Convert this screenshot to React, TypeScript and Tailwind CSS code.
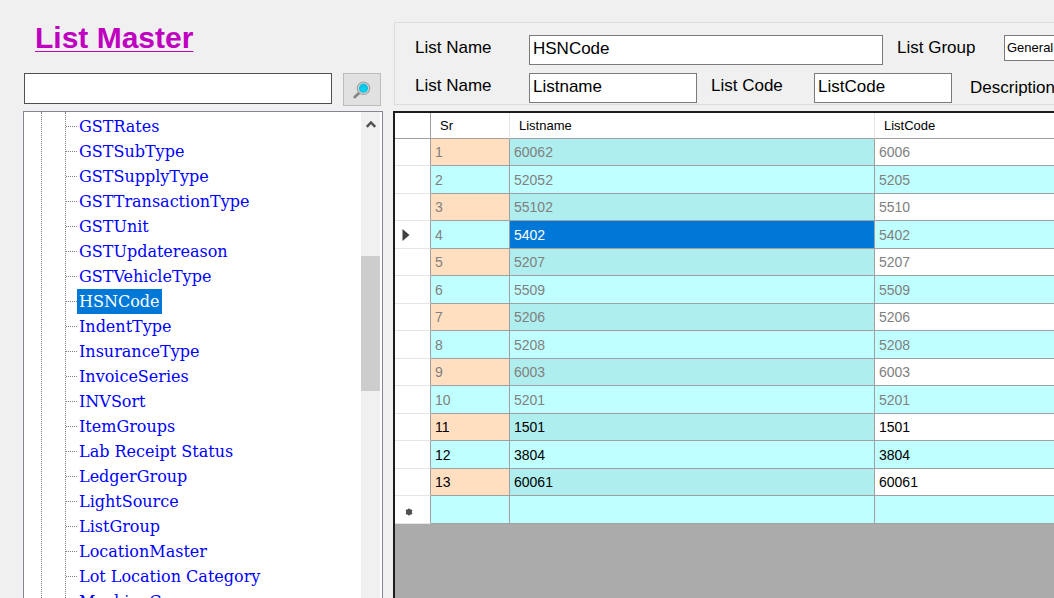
import React from "react";

type Row = { sr: string; name: string; code: string; locked: boolean };

const make = (sr: number, name: string, code: string, locked = true): Row => ({
  sr: String(sr),
  name,
  code,
  locked,
});

const rows: Row[] = [
  make(1, "60062", "6006"),
  make(2, "52052", "5205"),
  make(3, "55102", "5510"),
  make(4, "5402", "5402"),
  make(5, "5207", "5207"),
  make(6, "5509", "5509"),
  make(7, "5206", "5206"),
  make(8, "5208", "5208"),
  make(9, "6003", "6003"),
  make(10, "5201", "5201"),
  make(11, "1501", "1501", false),
  make(12, "3804", "3804", false),
  make(13, "60061", "60061", false),
  { sr: "", name: "", code: "", locked: false },
];

const treeItems = [
  "GSTRates",
  "GSTSubType",
  "GSTSupplyType",
  "GSTTransactionType",
  "GSTUnit",
  "GSTUpdatereason",
  "GSTVehicleType",
  "HSNCode",
  "IndentType",
  "InsuranceType",
  "InvoiceSeries",
  "INVSort",
  "ItemGroups",
  "Lab Receipt Status",
  "LedgerGroup",
  "LightSource",
  "ListGroup",
  "LocationMaster",
  "Lot Location Category",
  "MachineGroup",
];

function SearchIcon() {
  return (
    <svg width="18" height="18" viewBox="0 0 18 18" aria-hidden="true">
      <path d="M1.8 16 L5.8 12.2" stroke="#858585" strokeWidth="2.8" strokeLinecap="round" />
      <circle cx="10.5" cy="7.2" r="6.2" fill="#d8d8d8" stroke="#a2a2a2" strokeWidth="1.2" />
      <circle cx="10.5" cy="7.2" r="4.6" fill="#12bfe0" />
      <circle cx="10.5" cy="8" r="2.6" fill="#08d3ef" />
    </svg>
  );
}

function TreePanel() {
  return (
    <div className="flex min-h-0 flex-1 overflow-hidden border border-b-0 border-[#828790] bg-white">
      <nav aria-label="Lists" className="flex min-w-0 flex-1 overflow-hidden pl-[17px]">
        <div className="w-6 shrink-0 border-l border-dotted border-[#808080]" />
        <ul className="border-l border-dotted border-[#808080] pt-0.5">
          {treeItems.map((item) => (
            <li key={item} className="flex h-[25px] items-center">
              <span className="w-[11px] border-t border-dotted border-[#808080]" />
              <a
                href="#"
                className={
                  item === "HSNCode"
                    ? "bg-[#0078d7] px-0.5 text-[16px] leading-[25px] whitespace-nowrap text-white"
                    : "px-0.5 text-[16px] leading-[25px] whitespace-nowrap text-[#0000ff]"
                }
                style={{ fontFamily: '"DejaVu Serif", serif' }}
              >
                {item}
              </a>
            </li>
          ))}
        </ul>
      </nav>
      <div className="mr-0.5 flex w-[19px] shrink-0 flex-col bg-[#f0f0f0]">
        <div className="flex h-6 items-center justify-center">
          <svg width="12" height="8" viewBox="0 0 12 8" aria-hidden="true">
            <path d="M1.8 6.8 L6 2.4 L10.2 6.8" fill="none" stroke="#505050" strokeWidth="2.4" />
          </svg>
        </div>
        <div className="mt-[120px] h-[135px] bg-[#cdcdcd]" />
      </div>
    </div>
  );
}

function Field({ id, label, value, labelClass, inputClass }: {
  id: string;
  label: string;
  value: string;
  labelClass: string;
  inputClass: string;
}) {
  return (
    <>
      <label htmlFor={id} className={`shrink-0 text-[17px] leading-5 whitespace-nowrap ${labelClass}`}>
        {label}
      </label>
      <input
        id={id}
        defaultValue={value}
        className={`h-[30px] shrink-0 border border-[#7a7a7a] bg-white px-[3px] pb-0.5 text-[17px] outline-none ${inputClass}`}
      />
    </>
  );
}

function DetailsGroup() {
  return (
    <section className="mt-[22px] ml-px h-[83px] overflow-hidden border border-r-0 border-[#dcdcdc] pt-3 pl-5">
      <div className="flex h-[30px] items-start">
        <Field id="list-name" label="List Name" value="HSNCode" labelClass="mt-[3px] w-[114px]" inputClass="w-[354px]" />
        <label htmlFor="list-group" className="mt-[3px] ml-3.5 w-[107px] shrink-0 text-[17px] leading-5">
          List Group
        </label>
        <select
          id="list-group"
          className="h-[26px] w-[180px] shrink-0 appearance-none border border-[#7a7a7a] bg-white px-0.5 text-[13px] outline-none"
        >
          <option>General</option>
        </select>
      </div>
      <div className="mt-2 flex h-[30px] items-start">
        <Field id="list-name-2" label="List Name" value="Listname" labelClass="mt-[3px] w-[114px]" inputClass="w-[168px]" />
        <Field id="list-code" label="List Code" value="ListCode" labelClass="mt-[3px] ml-3.5 w-[103px]" inputClass="w-[138px]" />
        <Field id="description" label="Description" value="" labelClass="mt-[5px] ml-[18px] w-[103px]" inputClass="w-[138px]" />
      </div>
    </section>
  );
}

function RowMarker({ index }: { index: number }) {
  if (index === 3) {
    return (
      <svg width="8" height="14" viewBox="0 0 8 14" className="ml-[7px]" role="img" aria-label="Current row">
        <path d="M0.5 1 L7.5 7 L0.5 13 Z" fill="#404040" />
      </svg>
    );
  }
  if (index === rows.length - 1) {
    return (
      <svg width="8" height="8" viewBox="0 0 8 8" className="mt-1 ml-2.5" role="img" aria-label="New row">
        <circle cx="4" cy="4" r="3" fill="#505050" />
        <path d="M4 0.4 V7.6 M0.9 2.2 L7.1 5.8 M0.9 5.8 L7.1 2.2" stroke="#505050" strokeWidth="1.4" />
      </svg>
    );
  }
  return null;
}

function Grid() {
  const head = "border-b border-b-[#a0a0a0] bg-white px-[9px] text-left text-[13px] font-normal";
  const cell = "border-b border-[#a0a0a0] px-1 py-0";
  return (
    <div className="mt-1.5 min-h-0 flex-1 overflow-hidden border-t-2 border-l-2 border-[#1c1c1c] bg-[#ababab]">
      <table className="w-full table-fixed border-separate border-spacing-0 text-[14px] leading-6">
        <colgroup>
          <col className="w-9" />
          <col className="w-[79px]" />
          <col className="w-[365px]" />
          <col />
        </colgroup>
        <thead>
          <tr className="h-[26px]">
            <th className={`${head} border-r border-r-[#a0a0a0]`} aria-label="Row" />
            <th className={`${head} border-r border-r-[#e5e5e5]`}>Sr</th>
            <th className={`${head} border-r border-r-[#e5e5e5]`}>Listname</th>
            <th className={head}>ListCode</th>
          </tr>
        </thead>
        <tbody>
          {rows.map((row, i) => {
            const odd = i % 2 === 0;
            return (
              <tr
                key={i}
                className={`${odd ? "h-[27px]" : "h-7"} ${row.locked ? "text-[#808080]" : "text-black"}`}
              >
                <td className="border-r border-b border-r-[#a0a0a0] border-b-[#e5e5e5] bg-white p-0">
                  <RowMarker index={i} />
                </td>
                <td className={`${cell} border-r ${odd ? "bg-[#ffdfbf]" : "bg-[#c0ffff]"}`}>{row.sr}</td>
                <td
                  className={`${cell} border-r ${
                    i === 3 ? "bg-[#0078d7] text-white" : odd ? "bg-[#afeeee]" : "bg-[#c0ffff]"
                  }`}
                >
                  {row.name}
                </td>
                <td className={`${cell} ${odd ? "bg-white" : "bg-[#c0ffff]"}`}>{row.code}</td>
              </tr>
            );
          })}
        </tbody>
      </table>
    </div>
  );
}

export default function App() {
  return (
    <div
      className="flex h-screen overflow-hidden bg-[#f0f0f0] text-black"
      style={{ fontFamily: '"Liberation Sans", Arial, sans-serif' }}
    >
      <aside className="ml-[23px] flex w-[360px] shrink-0 flex-col">
        <h1 className="mt-5 ml-3 text-[30px] leading-9 font-bold text-[#c000c0] underline decoration-1 underline-offset-3">
          List Master
        </h1>
        <div className="mt-[17px] mb-[5px] flex items-start pr-0.5 pl-px">
          <input
            type="search"
            aria-label="Search lists"
            className="h-[31px] min-w-0 flex-1 border border-[#505050] bg-white px-1 text-[17px] outline-none"
          />
          <button
            type="button"
            aria-label="Search"
            className="ml-[11px] flex h-[33px] w-[38px] items-center justify-center border border-[#bcbcbc] bg-[#e1e1e1]"
          >
            <SearchIcon />
          </button>
        </div>
        <TreePanel />
      </aside>
      <main className="ml-2.5 flex min-w-0 flex-1 flex-col">
        <DetailsGroup />
        <Grid />
      </main>
    </div>
  );
}
